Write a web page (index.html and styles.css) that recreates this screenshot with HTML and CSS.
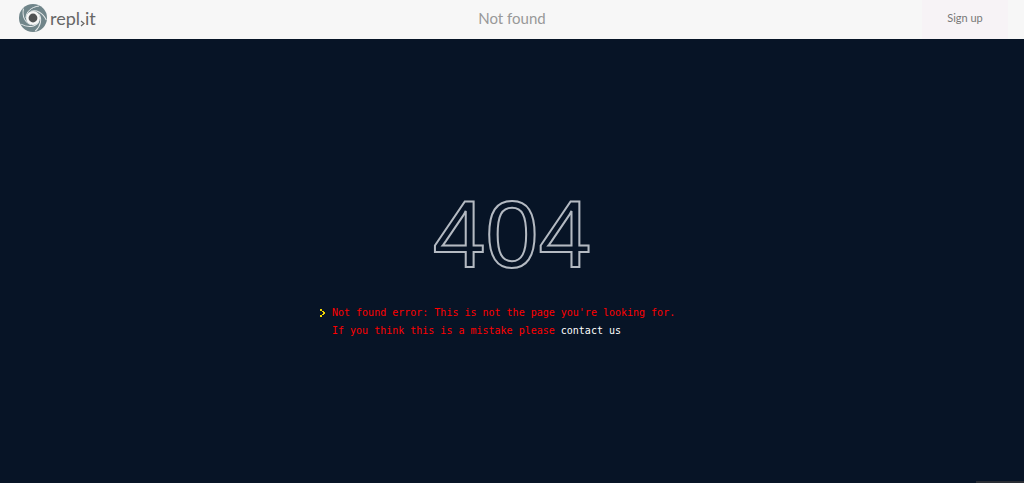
FILE: index.html
```html
<!DOCTYPE html>
<html lang="en">
<head>
<meta charset="utf-8">
<meta name="viewport" content="width=device-width, initial-scale=1">
<title>repl.it - Not found</title>
<link rel="stylesheet" href="styles.css">
</head>
<body>
<header class="topbar">
  <a class="brand" href="#">
    <svg class="brand-mark" viewBox="0 0 30 30" aria-hidden="true">
      <circle cx="15" cy="15" r="14" fill="#70858a"/>
      <circle cx="15" cy="15" r="7" fill="#f7f7f7"/>
      <g fill="none" stroke="#e4e8e9" stroke-width="1">
        <path id="blade" d="M8 15C8 9 13 4 21 3"/>
        <use href="#blade" transform="rotate(72 15 15)"/>
        <use href="#blade" transform="rotate(144 15 15)"/>
        <use href="#blade" transform="rotate(216 15 15)"/>
        <use href="#blade" transform="rotate(288 15 15)"/>
      </g>
      <circle cx="15" cy="15" r="4.4" fill="#505354"/>
    </svg>
    <span class="brand-name">repl<svg class="brand-dot" viewBox="0 0 5 7" aria-hidden="true"><path d="M1 1L4 3.5L1 6" fill="none" stroke="#666" stroke-width="1.2"/></svg>it</span>
  </a>
  <h1 class="title">Not found</h1>
  <a class="signup" href="#">Sign up</a>
</header>
<main class="screen">
  <div class="code">404</div>
  <div class="console">
    <svg class="prompt" viewBox="0 0 6 8" aria-hidden="true"><path d="M0 0h2v2h2v1h1v2H4v1H2v2H0V6h2V5h1V3H2V2H0z" fill="#f2d500"/></svg>
    <p class="message">Not found error: This is not the page you're looking for.<br>If you think this is a mistake please <a class="contact" href="#">contact us</a></p>
  </div>
</main>
<div class="status"></div>
</body>
</html>
```
FILE: styles.css
```css
* { box-sizing: border-box; }
body {
  margin: 0;
  min-height: 100vh;
  display: flex;
  flex-direction: column;
  background: #071426;
  font-family: Lato, "Liberation Sans", sans-serif;
}
.topbar {
  display: grid;
  grid-template-columns: 1fr auto 1fr;
  height: 39px;
  background: #f7f7f7;
}
.brand {
  display: flex;
  align-items: center;
  gap: 2px;
  padding: 0 0 4px 18px;
  color: #666;
  text-decoration: none;
}
.brand-mark { width: 30px; height: 30px; }
.brand-name { font-size: 18px; line-height: 22px; }
.brand-dot { width: 5px; height: 7px; vertical-align: -2px; }
.title {
  align-self: center;
  margin: 0;
  padding-bottom: 4px;
  color: #999;
  font-size: 15px;
  font-weight: 400;
  line-height: 20px;
}
.signup {
  justify-self: end;
  display: flex;
  align-items: center;
  justify-content: center;
  width: 86px;
  margin-right: 16px;
  padding-bottom: 4px;
  background: #f7f3f6;
  color: #777;
  font-size: 11px;
  text-decoration: none;
}
.screen {
  flex: 1;
  display: flex;
  flex-direction: column;
  align-items: center;
  justify-content: center;
  padding-bottom: 2px;
}
.code {
  color: transparent;
  font: 95px/110px "Liberation Sans", Arial, sans-serif;
  -webkit-text-stroke: 2px #b4bac2;
}
.console {
  display: flex;
  gap: 6px;
  width: 384px;
  margin-top: 15px;
}
.prompt { flex: none; width: 6px; height: 8px; margin-top: 5px; }
.message {
  margin: 0;
  color: #f00;
  font: 10px/18px "DejaVu Sans Mono", Consolas, monospace;
  white-space: nowrap;
}
.contact { color: #fff; text-decoration: none; }
.status {
  align-self: flex-end;
  width: 48px;
  height: 2px;
  background: #292d34;
}
```
